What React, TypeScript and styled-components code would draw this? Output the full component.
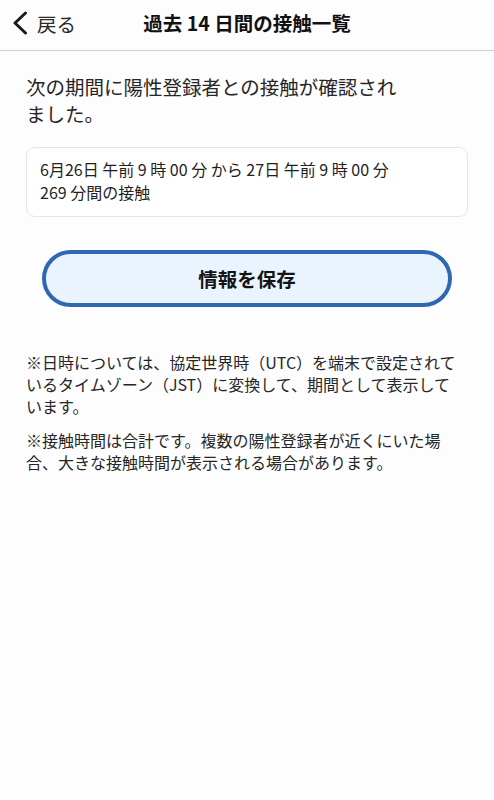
import React from "react";
import styled, { createGlobalStyle } from "styled-components";

const GlobalStyle = createGlobalStyle`
  html, body {
    margin: 0;
    padding: 0;
    background: #fdfdfe;
  }
  body {
    font-family: "Noto Sans CJK JP", "Noto Sans", sans-serif;
    color: #1a1a1a;
  }
`;

const Page = styled.div`
  width: 494px;
  min-height: 800px;
  background: #fdfdfe;
`;

const Header = styled.header`
  position: relative;
  height: 50px;
  display: flex;
  align-items: center;
  justify-content: center;
  border-bottom: 1px solid #cfcfd2;
  background: #fdfdfe;
`;

const BackButton = styled.button`
  position: absolute;
  left: 8px;
  top: 0;
  height: 46px;
  display: flex;
  align-items: center;
  gap: 9px;
  padding: 0 4px;
  border: none;
  background: transparent;
  font-family: inherit;
  font-size: 19.5px;
  color: #2b2b2b;
  cursor: pointer;
`;

const Title = styled.h1`
  margin: 0 0 6px;
  font-size: 19.5px;
  font-weight: 700;
  color: #111;
`;

const Content = styled.main`
  padding: 22px 26px 0;
`;

const Lead = styled.p`
  margin: 0;
  max-width: 386px;
  font-size: 19.5px;
  line-height: 27px;
  color: #262626;
`;

const ContactCard = styled.div`
  margin-top: 20px;
  padding: 10px 13px 12px;
  border: 1px solid #e6e6e8;
  border-radius: 9px;
  background: #fff;
  font-size: 16px;
  line-height: 23px;
  color: #1f1f1f;
`;

const SaveButton = styled.button`
  display: block;
  width: calc(100% - 32px);
  height: 57px;
  margin: 33px auto 0;
  border: 4px solid #2e68b1;
  border-radius: 29px;
  background: #eaf4fe;
  font-family: inherit;
  font-size: 19.5px;
  font-weight: 700;
  color: #141414;
  cursor: pointer;
`;

const Notes = styled.div`
  margin-top: 44px;
  display: flex;
  flex-direction: column;
  gap: 12px;
`;

const Note = styled.p`
  margin: 0;
  max-width: 432px;
  font-size: 16px;
  line-height: 22px;
  color: #262626;
`;

const Chevron = () => (
  <svg width="16" height="24" viewBox="0 0 16 24" fill="none">
    <path
      d="M13.5 2 L3 12 L13.5 22"
      stroke="#1a1a1a"
      strokeWidth="3"
      strokeLinecap="round"
      strokeLinejoin="round"
    />
  </svg>
);

export default function App() {
  return (
    <Page>
      <GlobalStyle />
      <Header>
        <BackButton>
          <Chevron />
          戻る
        </BackButton>
        <Title>過去 14 日間の接触一覧</Title>
      </Header>
      <Content>
        <Lead>次の期間に陽性登録者との接触が確認されました。</Lead>
        <ContactCard>
          6月26日 午前 9 時 00 分 から 27日 午前 9 時 00 分
          <br />
          269 分間の接触
        </ContactCard>
        <SaveButton>情報を保存</SaveButton>
        <Notes>
          <Note>
            ※日時については、協定世界時（UTC）を端末で設定されているタイムゾーン（JST）に変換して、期間として表示しています。
          </Note>
          <Note>
            ※接触時間は合計です。複数の陽性登録者が近くにいた場合、大きな接触時間が表示される場合があります。
          </Note>
        </Notes>
      </Content>
    </Page>
  );
}
